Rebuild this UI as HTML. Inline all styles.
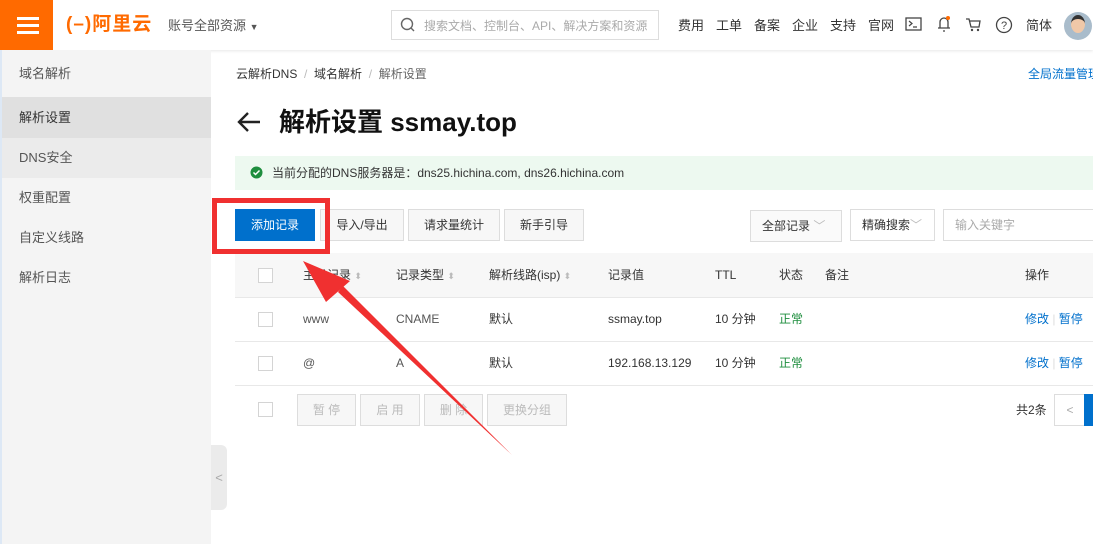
<!DOCTYPE html>
<html><head><meta charset="utf-8"><style>
*{margin:0;padding:0;box-sizing:border-box}
body{width:1093px;height:544px;overflow:hidden;position:relative;background:#fff;font-family:"Liberation Sans","Noto Sans CJK SC",sans-serif;font-size:12px;color:#333}
.a{position:absolute;white-space:nowrap;line-height:16px}
.btn{position:absolute;border:1px solid #ddd;background:#f7f7f7;height:32px;line-height:30px;text-align:center;color:#333}
.cb{position:absolute;width:15px;height:15px;border:1px solid #d4d4d4;background:#fff;left:258px}
.hl{position:absolute;left:235px;right:0;height:1px;background:#e8e8e8}
.sort{color:#bbb;font-size:9px}
</style></head><body>
<div class="a" style="left:0;top:0;width:1093px;height:50px;background:#fff;box-shadow:0 1px 3px rgba(0,0,0,.1)"></div>
<div class="a" style="left:0;top:0;width:53px;height:50px;background:#ff6a00"></div>
<div class="a" style="left:17px;top:17px;width:22px;height:3px;background:#fff;box-shadow:0 7px 0 #fff,0 14px 0 #fff"></div>
<div class="a" style="left:66px;top:14px;font-size:19px;line-height:22px;font-weight:bold;color:#ff6a00;letter-spacing:1px">(–)阿里云</div>
<div class="a" style="left:168px;top:18px;color:#555;font-size:13px">账号全部资源 <span style="font-size:9px">▼</span></div>
<div class="a" style="left:391px;top:10px;width:268px;height:30px;border:1px solid #ddd"></div>
<svg class="a" style="left:400px;top:17px" width="16" height="16"><circle cx="7" cy="7" r="5.5" fill="none" stroke="#666" stroke-width="1.4"/><line x1="11" y1="11" x2="14" y2="14" stroke="#666" stroke-width="1.4"/></svg>
<div class="a" style="left:424px;top:18px;color:#aaa;font-size:12px">搜索文档、控制台、API、解决方案和资源</div>
<div class="a" style="left:678px;top:18px;font-size:13px">费用</div>
<div class="a" style="left:716px;top:18px;font-size:13px">工单</div>
<div class="a" style="left:754px;top:18px;font-size:13px">备案</div>
<div class="a" style="left:792px;top:18px;font-size:13px">企业</div>
<div class="a" style="left:830px;top:18px;font-size:13px">支持</div>
<div class="a" style="left:868px;top:18px;font-size:13px">官网</div>
<svg class="a" style="left:905px;top:17px" width="17" height="15"><rect x="1" y="1" width="15" height="12" fill="none" stroke="#444" stroke-width="1.3"/><path d="M4 4l3 2.5-3 2.5M8 10h4" fill="none" stroke="#444" stroke-width="1.2"/></svg>
<svg class="a" style="left:936px;top:15px" width="16" height="18"><path d="M4 13V7a4 4 0 018 0v6M2 13h12M7 16h2" fill="none" stroke="#444" stroke-width="1.3"/><circle cx="12" cy="3" r="2" fill="#ff6a00"/></svg>
<svg class="a" style="left:965px;top:17px" width="17" height="16"><path d="M1 2h3l2 8h8l1-6H5" fill="none" stroke="#444" stroke-width="1.3"/><circle cx="7" cy="13" r="1.2" fill="#444"/><circle cx="13" cy="13" r="1.2" fill="#444"/></svg>
<svg class="a" style="left:995px;top:16px" width="18" height="18"><circle cx="9" cy="9" r="7.5" fill="none" stroke="#444" stroke-width="1.3"/><text x="9" y="13" font-size="11" text-anchor="middle" fill="#444" font-family="Liberation Sans">?</text></svg>
<div class="a" style="left:1026px;top:18px;font-size:13px">简体</div>
<div class="a" style="left:1064px;top:12px;width:28px;height:28px;border-radius:50%;background:#a9bccb"></div>
<div class="a" style="left:1071px;top:15px;width:14px;height:18px;border-radius:50%;background:#f0c8a8;border-top:4px solid #333"></div>
<div class="a" style="left:0;top:50px;width:211px;height:494px;background:#f4f4f4;border-left:2px solid #dde8f5"></div>
<div class="a" style="left:2px;top:97px;width:209px;height:41px;background:#e0e0e0"></div>
<div class="a" style="left:2px;top:138px;width:209px;height:40px;background:#ebebeb"></div>
<div class="a" style="left:19px;top:66px;font-size:13px;color:#555">域名解析</div>
<div class="a" style="left:19px;top:110px;font-size:13px;color:#333">解析设置</div>
<div class="a" style="left:19px;top:150px;font-size:13px;color:#555">DNS安全</div>
<div class="a" style="left:19px;top:190px;font-size:13px;color:#555">权重配置</div>
<div class="a" style="left:19px;top:230px;font-size:13px;color:#555">自定义线路</div>
<div class="a" style="left:19px;top:270px;font-size:13px;color:#555">解析日志</div>
<div class="a" style="left:211px;top:445px;width:16px;height:65px;background:#ebebeb;border-radius:0 6px 6px 0;color:#aaa;font-size:13px;line-height:65px;text-align:center">&lt;</div>
<div class="a" style="left:236px;top:66px;color:#333">云解析DNS <span style="color:#bbb">&nbsp;/&nbsp;</span> 域名解析 <span style="color:#bbb">&nbsp;/&nbsp;</span> <span style="color:#666">解析设置</span></div>
<div class="a" style="left:1028px;top:66px;color:#0070cc">全局流量管理</div>
<svg class="a" style="left:236px;top:110px" width="26" height="24"><path d="M24 12H3M12 3l-9 9 9 9" fill="none" stroke="#222" stroke-width="2.4"/></svg>
<div class="a" style="left:279px;top:106px;font-size:26px;line-height:32px;font-weight:bold;color:#111">解析设置 ssmay.top</div>
<div class="a" style="left:235px;top:156px;width:858px;height:34px;background:#edf9f0"></div>
<svg class="a" style="left:250px;top:166px" width="13" height="13"><circle cx="6.5" cy="6.5" r="6" fill="#1e8e3e"/><path d="M3.5 6.5l2 2 4-4" fill="none" stroke="#fff" stroke-width="1.5"/></svg>
<div class="a" style="left:272px;top:165px;color:#333">当前分配的DNS服务器是：dns25.hichina.com, dns26.hichina.com</div>
<div class="a" style="left:235px;top:209px;width:80px;height:32px;background:#0070cc;color:#fff;line-height:32px;text-align:center">添加记录</div>
<div class="btn" style="left:320px;top:209px;width:84px">导入/导出</div>
<div class="btn" style="left:408px;top:209px;width:92px">请求量统计</div>
<div class="btn" style="left:504px;top:209px;width:80px">新手引导</div>
<div class="btn" style="left:750px;top:210px;width:92px;background:#fafafa;text-align:left;padding-left:11px">全部记录 <span style="color:#bbb">﹀</span></div>
<div class="btn" style="left:850px;top:209px;width:85px;background:#fff;text-align:left;padding-left:11px">精确搜索<span style="color:#bbb">﹀</span></div>
<div class="btn" style="left:943px;top:209px;width:160px;background:#fff;text-align:left;padding-left:11px;color:#aaa">输入关键字</div>
<div class="a" style="left:235px;top:253px;width:858px;height:44px;background:#f7f7f7"></div>
<div class="hl" style="top:297px"></div><div class="hl" style="top:341px"></div><div class="hl" style="top:385px"></div>
<div class="cb" style="top:268px"></div><div class="cb" style="top:312px"></div><div class="cb" style="top:356px"></div><div class="cb" style="top:402px"></div>
<div class="a" style="left:303px;top:267px">主机记录 <span class="sort">⬍</span></div>
<div class="a" style="left:396px;top:267px">记录类型 <span class="sort">⬍</span></div>
<div class="a" style="left:489px;top:267px">解析线路(isp) <span class="sort">⬍</span></div>
<div class="a" style="left:608px;top:267px">记录值</div>
<div class="a" style="left:715px;top:267px">TTL</div>
<div class="a" style="left:779px;top:267px">状态</div>
<div class="a" style="left:825px;top:267px">备注</div>
<div class="a" style="left:1025px;top:267px">操作</div>
<div class="a" style="left:303px;top:311px;color:#555">www</div>
<div class="a" style="left:396px;top:311px;color:#555">CNAME</div>
<div class="a" style="left:489px;top:311px">默认</div>
<div class="a" style="left:608px;top:311px">ssmay.top</div>
<div class="a" style="left:715px;top:311px">10 分钟</div>
<div class="a" style="left:779px;top:311px;color:#1e8e3e">正常</div>
<div class="a" style="left:1025px;top:311px;color:#0070cc">修改 <span style="color:#ddd">|</span> 暂停</div>
<div class="a" style="left:303px;top:355px;color:#555">@</div>
<div class="a" style="left:396px;top:355px;color:#555">A</div>
<div class="a" style="left:489px;top:355px">默认</div>
<div class="a" style="left:608px;top:355px">192.168.13.129</div>
<div class="a" style="left:715px;top:355px">10 分钟</div>
<div class="a" style="left:779px;top:355px;color:#1e8e3e">正常</div>
<div class="a" style="left:1025px;top:355px;color:#0070cc">修改 <span style="color:#ddd">|</span> 暂停</div>
<div class="btn" style="left:297px;top:394px;width:59px;color:#bbb">暂 停</div>
<div class="btn" style="left:360px;top:394px;width:60px;color:#bbb">启 用</div>
<div class="btn" style="left:424px;top:394px;width:59px;color:#bbb">删 除</div>
<div class="btn" style="left:487px;top:394px;width:80px;color:#bbb">更换分组</div>
<div class="a" style="left:1016px;top:402px">共2条</div>
<div class="a" style="left:1054px;top:394px;width:32px;height:32px;border:1px solid #ddd;color:#aaa;text-align:center;line-height:30px">&lt;</div>
<div class="a" style="left:1084px;top:394px;width:9px;height:32px;background:#0070cc"></div>
<div class="a" style="left:212px;top:198px;width:118px;height:56px;border:5px solid #f03030"></div>
<svg class="a" style="left:0;top:0" width="1093" height="544"><path d="M512 455L338 292l5-6z" fill="#f03030"/><path d="M303 261L350 281 326 302z" fill="#f03030"/></svg>
</body></html>
